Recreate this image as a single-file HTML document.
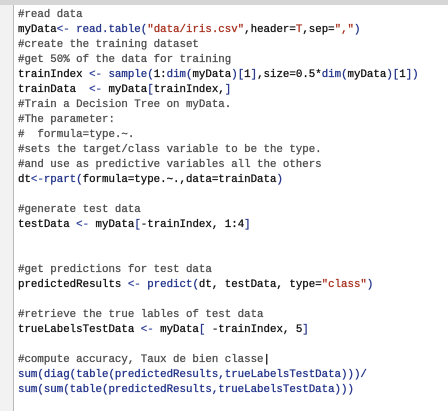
<!DOCTYPE html>
<html><head><meta charset="utf-8"><style>
body{margin:0;width:448px;height:411px;background:#fff;overflow:hidden;position:relative}
.top{position:absolute;left:0;top:0;width:448px;height:5px;background:#d6d6d6}
.gut{position:absolute;left:0;top:5px;width:13px;height:406px;background:#f2f2f2;border-right:1px solid #b8b8b8}
pre{position:absolute;left:18px;top:7.5px;margin:0;font-family:"Liberation Mono",monospace;font-size:10.77px;line-height:15px;color:#111;-webkit-text-stroke:0.3px}
.c{color:#4e4e4e}.f{color:#22338a}.s{color:#a8301f}.o{color:#33449a}
</style></head><body>
<div class="top"></div><div class="gut"></div>
<pre><span class="c">#read data</span>
myData<span class="o">&lt;-</span> <span class="f">read.table(</span><span class="s">"data/iris.csv"</span>,header=<span class="s">T</span>,sep=<span class="s">","</span><span class="f">)</span>
<span class="c">#create the training dataset</span>
<span class="c">#get 50% of the data for training</span>
trainIndex <span class="o">&lt;-</span> <span class="f">sample(</span>1:<span class="f">dim(</span>myData<span class="f">)[</span>1<span class="f">]</span>,size=0.5*<span class="f">dim(</span>myData<span class="f">)[</span>1<span class="f">])</span>
trainData  <span class="o">&lt;-</span> myData<span class="f">[</span>trainIndex,<span class="f">]</span>
<span class="c">#Train a Decision Tree on myData.</span>
<span class="c">#The parameter:</span>
<span class="c">#  formula=type.~.</span>
<span class="c">#sets the target/class variable to be the type.</span>
<span class="c">#and use as predictive variables all the others</span>
dt<span class="o">&lt;-</span><span class="f">rpart(</span>formula=type.~.,data=trainData<span class="f">)</span>

<span class="c">#generate test data</span>
testData <span class="o">&lt;-</span> myData<span class="f">[</span>-trainIndex, 1:4<span class="f">]</span>


<span class="c">#get predictions for test data</span>
predictedResults <span class="o">&lt;-</span> <span class="f">predict(</span>dt, testData, type=<span class="s">"class"</span><span class="f">)</span>

<span class="c">#retrieve the true lables of test data</span>
trueLabelsTestData <span class="o">&lt;-</span> myData<span class="f">[</span> -trainIndex, 5<span class="f">]</span>

<span class="c">#compute accuracy, Taux de bien classe</span>|
<span class="f">sum(diag(table(predictedResults,trueLabelsTestData)))/</span>
<span class="f">sum(sum(table(predictedResults,trueLabelsTestData)))</span></pre>
</body></html>
